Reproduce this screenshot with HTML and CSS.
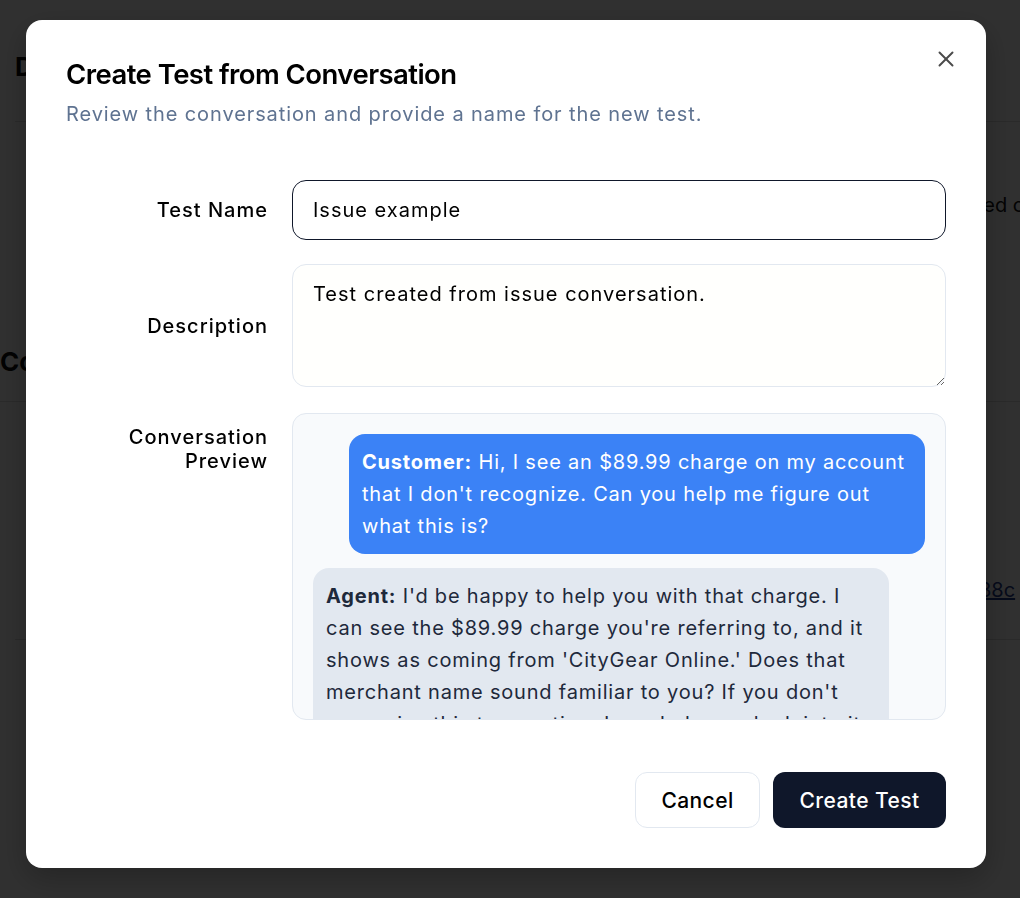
FILE: index.html
```html
<!DOCTYPE html>
<html lang="en">
<head>
<meta charset="utf-8">
<title>Create Test from Conversation</title>
<link rel="stylesheet" href="styles.css">
</head>
<body>
<div class="page">
  <header class="page-header">
    <h1 class="page-title">Details</h1>
  </header>
  <div class="meta-row">
    <p class="page-meta">Created conversation</p>
  </div>
  <div class="section-head">
    <h2 class="page-heading">Conversation</h2>
  </div>
  <div class="section-body">
    <a class="page-link" href="#">a1f38c</a>
  </div>
</div>

<div class="overlay">
  <div class="modal" role="dialog" aria-labelledby="dlg-title">
    <button class="close" aria-label="Close">
      <svg viewBox="0 0 24 24" width="26" height="26" fill="none" stroke="currentColor" stroke-width="1.8" stroke-linecap="round" stroke-linejoin="round"><path d="M18 6 6 18"/><path d="m6 6 12 12"/></svg>
    </button>
    <div class="modal-header">
      <h2 id="dlg-title" class="modal-title">Create Test from Conversation</h2>
      <p class="modal-desc">Review the conversation and provide a name for the new test.</p>
    </div>

    <div class="form">
      <div class="row center">
        <label class="label" for="name">Test Name</label>
        <input id="name" class="input" type="text" value="Issue example">
      </div>
      <div class="row center">
        <label class="label" for="desc">Description</label>
        <textarea id="desc" class="textarea">Test created from issue conversation.</textarea>
      </div>
      <div class="row top preview-row">
        <div class="label multi">Conversation<br>Preview</div>
        <div class="preview">
          <div class="bubble customer"><strong>Customer:</strong> Hi, I see an $89.99 charge on my account that I don't recognize. Can you help me figure out what this is?</div>
          <div class="bubble agent"><strong>Agent:</strong> I'd be happy to help you with that charge. I can see the $89.99 charge you're referring to, and it shows as coming from 'CityGear Online.' Does that merchant name sound familiar to you? If you don't recognize this transaction, I can help you look into it and open a dispute.</div>
        </div>
      </div>
    </div>

    <div class="footer">
      <button class="btn outline">Cancel</button>
      <button class="btn primary">Create Test</button>
    </div>
  </div>
</div>
</body>
</html>
```
FILE: styles.css
```css
* { box-sizing: border-box; }
html, body { margin: 0; padding: 0; }
body {
  font-family: Inter, "Noto Sans", "Liberation Sans", sans-serif;
  background: #ffffff;
  color: #0b0b0b;
  width: 1020px;
  height: 898px;
  overflow: hidden;
}

/* background page (under the overlay) */
.page { padding: 0 0 0 15px; width: 1020px; overflow: hidden; }
.page-header { height: 122px; border-bottom: 1px solid #dcdcdc; padding-top: 52px; }
.page-title { margin: 0; font-size: 26px; line-height: 30px; font-weight: 700; }
.meta-row { height: 180px; padding-top: 71px; }
.page-meta { margin: 0 0 0 917px; white-space: nowrap; font-size: 20px; line-height: 24px; color: #111; }
.section-head { height: 100px; padding-top: 45px; border-bottom: 1px solid #dcdcdc; margin-left: -15px; }
.page-heading { margin: 0; font-size: 26px; line-height: 30px; font-weight: 700; }
.section-body { height: 238px; border-bottom: 1px solid #dcdcdc; padding: 176px 0 0 938px; white-space: nowrap; }
.page-link { color: #1e3a8a; font-size: 20px; line-height: 24px; }

/* overlay + dialog */
.overlay {
  position: fixed;
  inset: 0;
  background: rgba(0, 0, 0, 0.81);
  padding: 20px 0 0 26px;
}
.modal {
  position: relative;
  width: 960px;
  height: 848px;
  background: #ffffff;
  border-radius: 16px;
  padding: 38px 40px 40px;
  display: flex;
  flex-direction: column;
  box-shadow: 0 10px 30px rgba(0,0,0,0.25);
}
.close {
  position: absolute;
  top: 26px;
  right: 27px;
  width: 26px;
  height: 26px;
  padding: 0;
  border: 0;
  background: none;
  color: #4b4b4b;
  display: flex;
}

.modal-header { display: flex; flex-direction: column; gap: 10px; }
.modal-title {
  margin: 0;
  font-size: 27.5px;
  line-height: 32px;
  font-weight: 600;
  letter-spacing: -0.02em;
  color: #000;
}
.modal-desc {
  margin: 0;
  font-size: 20px;
  line-height: 28px;
  letter-spacing: 0.045em;
  color: #5f7391;
}

.form {
  margin-top: 52px;
  display: flex;
  flex-direction: column;
  gap: 24px;
}
.row {
  display: grid;
  grid-template-columns: repeat(4, 1fr);
  column-gap: 24px;
}
.row.center { align-items: center; }
.row.top { align-items: start; }
.preview-row { margin-top: 2px; }
.label {
  text-align: right;
  font-size: 20px;
  line-height: 24px;
  font-weight: 500;
  letter-spacing: 0.05em;
  color: #000;
}
.label.multi { padding-top: 12px; }
.input, .textarea, .preview { grid-column: span 3; }
.input {
  height: 60px;
  border: 1.5px solid #0f172a;
  border-radius: 14px;
  padding: 0 20px;
  font: inherit;
  font-size: 20px;
  letter-spacing: 0.05em;
  color: #000;
  background: #fff;
  outline: none;
}
.textarea {
  height: 123px;
  border: 1px solid #e2e8f0;
  border-radius: 14px;
  padding: 17px 20px;
  font: inherit;
  font-size: 20px;
  line-height: 24px;
  letter-spacing: 0.05em;
  color: #000;
  background: #fffffd;
  resize: vertical;
  outline: none;
}
.preview {
  height: 307px;
  overflow: hidden;
  border: 1px solid #e2e8f0;
  border-radius: 14px;
  background: #f8fafc;
  padding: 20px;
  display: flex;
  flex-direction: column;
  gap: 14px;
}
.bubble {
  width: 576px;
  border-radius: 16px;
  padding: 12px 13px;
  font-size: 20px;
  line-height: 32px;
  letter-spacing: 0.04em;
  flex-shrink: 0;
}
.bubble strong { font-weight: 700; }
.customer { align-self: flex-end; background: #3b82f6; color: #ffffff; }
.agent { align-self: flex-start; background: #e2e8f0; color: #1e293b; }

.footer {
  margin-top: auto;
  display: flex;
  justify-content: flex-end;
  gap: 13px;
}
.btn {
  height: 56px;
  border-radius: 12px;
  font: inherit;
  font-size: 21px;
  font-weight: 500;
  letter-spacing: 0.02em;
  padding: 0;
}
.btn.outline { width: 125px; background: #fff; border: 1px solid #e2e8f0; color: #000; }
.btn.primary { width: 173px; background: #0f172a; border: 0; color: #fff; }
```
